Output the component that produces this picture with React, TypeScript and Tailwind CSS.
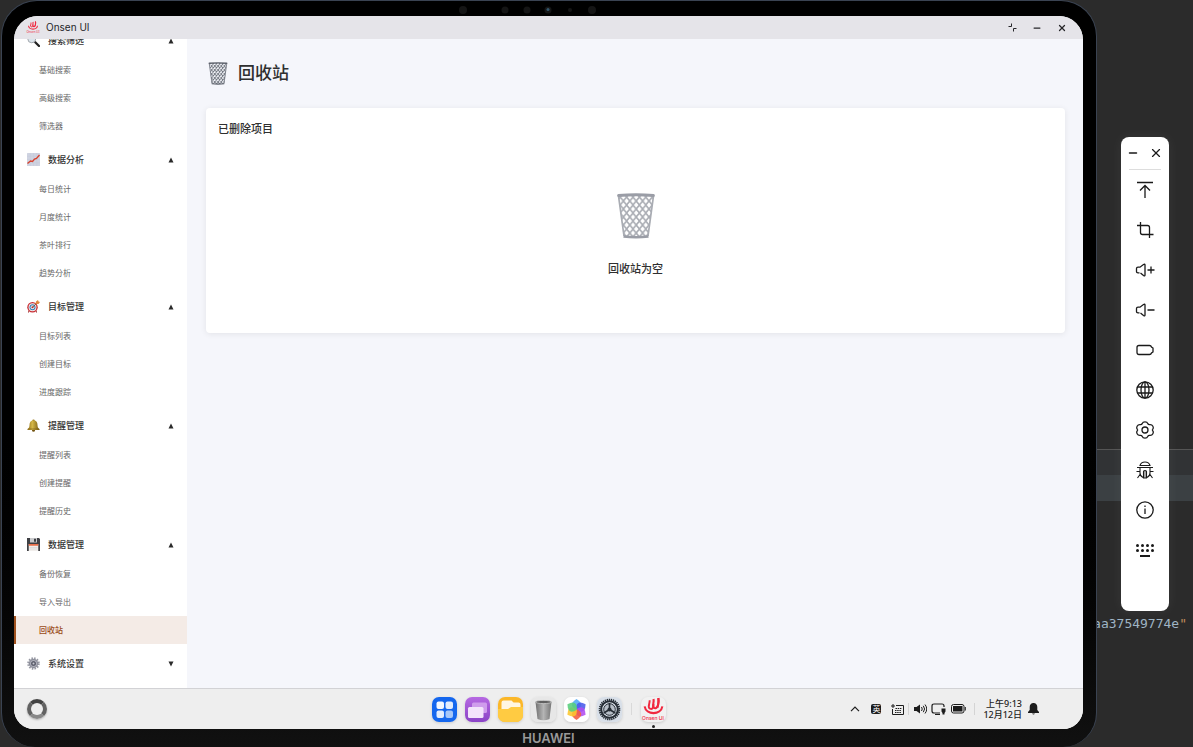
import { useState } from "react";
import type { ReactNode } from "react";
import { Minus, X } from "lucide-react";

interface MenuGroup {
  title: string;
  icon: ReactNode;
  items: string[];
}

const SearchIcon = () => (
  <svg viewBox="0 0 26 26" className="size-[13px]">
    <path d="M15 15l9 9" stroke="#222" strokeWidth="4.5" strokeLinecap="round" />
    <circle cx="9.500" cy="9.500" r="8" fill="#dce5ec" stroke="#a3a7ad" strokeWidth="2" />
  </svg>
);

const ChartIcon = () => (
  <svg viewBox="0 0 26 26" className="size-[13px]">
    <rect width="26" height="26" rx="1" fill="#cfd3e1" />
    <path d="M0 6.500h26M0 13h26M0 19.500h26M6.500 0v26M13 0v26M19.500 0v26" stroke="#c4c9d9" />
    <path d="M1 21l6-5 4 1 4-5 4-1 6-7" fill="none" stroke="#d8432f" strokeWidth="2.8" />
  </svg>
);

const TargetIcon = () => (
  <svg viewBox="0 0 26 26" className="size-[13px]">
    <path d="M4 21l-1 4M18 21l1 4" stroke="#9b2a2a" strokeWidth="2" />
    <circle cx="11" cy="14.500" r="10.500" fill="#c92f35" />
    <circle cx="11" cy="14.500" r="7.800" fill="#f4eeee" />
    <circle cx="11" cy="14.500" r="6" fill="#3b7fb5" />
    <circle cx="11" cy="14.500" r="3.800" fill="#e9eef2" />
    <circle cx="11" cy="14.500" r="2.200" fill="#cc2f35" />
    <path d="M11 14.500L21 5" stroke="#7a4a2a" strokeWidth="1.800" />
    <path d="M17 8l1-5 4-3 1 3 3 1-3 4z" fill="#e0873f" />
  </svg>
);

const BellIcon = () => (
  <svg viewBox="0 0 26 26" className="size-[13px]">
    <defs>
      <linearGradient id="bellGold">
        <stop offset="0" stopColor="#8d6c15" />
        <stop offset=".4" stopColor="#d6b848" />
        <stop offset="1" stopColor="#765a10" />
      </linearGradient>
    </defs>
    <circle cx="13" cy="3.500" r="2.500" fill="#9b7a1c" />
    <circle cx="13" cy="22.500" r="3" fill="#755713" />
    <path d="M13 3c6 0 8 4 8 9 0 4 1 6 4 8v2H1v-2c3-2 4-4 4-8 0-5 2-9 8-9z" fill="url(#bellGold)" />
    <path d="M3 20h20" stroke="#735510" strokeWidth="1.200" />
  </svg>
);

const FloppyIcon = () => (
  <svg viewBox="0 0 26 26" className="size-[13px]">
    <path d="M0 0h24l2 2v24H0z" fill="#3f4044" />
    <rect x="6" width="14" height="9" fill="#c9cacc" />
    <rect x="14" y="1.500" width="4" height="6" fill="#3f4044" />
    <rect x="3.500" y="12" width="19" height="14" fill="#f1eeec" />
    <rect x="3.500" y="12" width="19" height="3.500" fill="#e86f4a" />
    <path d="M5 19h16M5 22h16" stroke="#ccc" />
  </svg>
);

const GearIcon = () => (
  <svg viewBox="0 0 26 26" className="size-[13px]">
    <circle cx="13" cy="13" r="10.500" fill="none" stroke="#9698a3" strokeWidth="4" strokeDasharray="3 2.500" />
    <circle cx="13" cy="13" r="9.500" fill="#8d8f9b" />
    <circle cx="13" cy="13" r="6.500" fill="#b9bac4" />
    <circle cx="13" cy="13" r="5" fill="#5d5f6d" />
    <circle cx="13" cy="13" r="2" fill="#c7c8d0" />
  </svg>
);

const WireBasket = ({ id, className, wire, rim }: { id: string; className: string; wire: string; rim: string }) => (
  <svg viewBox="0 0 38 46" className={className}>
    <defs>
      <pattern id={id} width="6.400" height="8" patternUnits="userSpaceOnUse">
        <path d="M0 0l6.400 8M6.400 0L0 8" stroke={wire} strokeWidth="1.700" fill="none" />
      </pattern>
    </defs>
    <path d="M1.500 2h35l-5 41q-12.500 2-25 0z" fill={`url(#${id})`} />
    <path d="M1.500 3l5.500 40M36.500 3L31 43" stroke={wire} strokeWidth="1.700" />
    <path d="M6.500 43.500q12.500 1.500 25 0" fill="none" stroke={rim} strokeWidth="2.400" />
    <path d="M1.500 2.500q17.500-1.500 35 0" fill="none" stroke={rim} strokeWidth="2.800" strokeLinecap="round" />
  </svg>
);

const OnsenMark = ({ className }: { className: string }) => (
  <svg viewBox="0 0 26 20" className={className} fill="none" stroke="#f0283f">
    <path d="M3 10.500c1.500 10 18.500 10 20 0" strokeWidth="2.400" />
    <path d="M8.500 3.500c1 3-3 8 .5 9.500s4-2.500 4-5" strokeWidth="2.200" />
    <path d="M13 2c1 4-2 8 .5 10s5-2 5-6V1" strokeWidth="2.400" />
    <path d="M18.500 1c1.500 4-.5 8-1 11" strokeWidth="2.200" />
  </svg>
);

const menu: MenuGroup[] = [
  { title: "搜索筛选", icon: <SearchIcon />, items: ["基础搜索", "高级搜索", "筛选器"] },
  { title: "数据分析", icon: <ChartIcon />, items: ["每日统计", "月度统计", "茶叶排行", "趋势分析"] },
  { title: "目标管理", icon: <TargetIcon />, items: ["目标列表", "创建目标", "进度跟踪"] },
  { title: "提醒管理", icon: <BellIcon />, items: ["提醒列表", "创建提醒", "提醒历史"] },
  { title: "数据管理", icon: <FloppyIcon />, items: ["备份恢复", "导入导出", "回收站"] },
  { title: "系统设置", icon: <GearIcon />, items: ["通用设置", "关于"] },
];

function TitleBar() {
  return (
    <header className="flex h-[23px] shrink-0 items-center bg-[#e5e4e9] pl-3 pr-4 text-[#26262a]">
      <div className="flex w-[14px] flex-col items-center">
        <OnsenMark className="h-[9px] w-3" />
        <span className="text-[3px] leading-[4px] text-[#f0283f]">Onsen UI</span>
      </div>
      <h1 className="ml-[6px] flex-1 font-['Inter',sans-serif] text-[10px]">Onsen UI</h1>
      <div className="flex items-center gap-[15px]">
        <button aria-label="还原">
          <svg viewBox="0 0 9 9" className="size-[9px]" fill="none" stroke="currentColor">
            <path d="M3.500 0.500v3h-3M8.500 5.500h-3v3" />
          </svg>
        </button>
        <button aria-label="最小化">
          <Minus className="size-[10px]" strokeWidth={3} />
        </button>
        <button aria-label="关闭">
          <X className="size-[10px]" strokeWidth={3} />
        </button>
      </div>
    </header>
  );
}

function Sidebar() {
  const [closed, setClosed] = useState<string[]>(["系统设置"]);
  const [active, setActive] = useState("回收站");

  const toggle = (title: string) => {
    setClosed(closed.includes(title) ? closed.filter((t) => t !== title) : [...closed, title]);
  };

  return (
    <nav className="flex w-[173px] shrink-0 flex-col justify-end gap-1 overflow-hidden bg-white pb-[9px]">
      {menu.map((group) => (
        <div key={group.title} className="shrink-0">
          <button
            onClick={() => toggle(group.title)}
            className="flex h-[31px] w-full items-center px-[13px] text-[9px] font-medium text-[#333]"
          >
            {group.icon}
            <span className="ml-2 flex-1 text-left">{group.title}</span>
            <svg viewBox="0 0 6 6" className="size-[6px]">
              <path d={closed.includes(group.title) ? "M0.500 0.500h5L3 5.500z" : "M0.500 5.500h5L3 0.500z"} fill="#2a2a2a" />
            </svg>
          </button>
          {!closed.includes(group.title) &&
            group.items.map((item) => (
              <a
                key={item}
                href="#"
                onClick={() => setActive(item)}
                className={
                  item === active
                    ? "flex h-7 items-center border-l-2 border-[#a0521f] bg-[#f4ebe6] pl-[23px] text-[8px] font-medium text-[#9a4a17]"
                    : "flex h-7 items-center pl-[25px] text-[8px] text-[#666]"
                }
              >
                {item}
              </a>
            ))}
        </div>
      ))}
    </nav>
  );
}

function RecycleBin() {
  return (
    <main className="min-w-0 flex-1 bg-[#f5f6fb] pl-[19px] pr-[18px] pt-[22px]">
      <h2 className="flex h-6 items-center gap-[10px] text-[17px] font-medium text-[#2f2f2f]">
        <WireBasket id="basketSmall" className="ml-[2px] h-[23px] w-5" wire="#747982" rim="#5d626c" />
        回收站
      </h2>
      <section className="mt-[23px] rounded bg-white px-3 pb-[55px] pt-3 shadow-[0_1px_6px_rgba(0,0,0,0.08)]">
        <h3 className="text-[11px] font-medium leading-[18px] text-[#2f2f2f]">已删除项目</h3>
        <div className="mt-[55px] flex flex-col items-center">
          <WireBasket id="basketLarge" className="h-[46px] w-[38px]" wire="#a9acb3" rim="#9a9da6" />
          <p className="mt-[21px] text-[11px] font-medium leading-[18px] text-[#2f2f2f]">回收站为空</p>
        </div>
      </section>
    </main>
  );
}

const dockButton = "size-[25px] overflow-hidden rounded-[7px] shadow-[0_1px_3px_rgba(0,0,0,0.15)]";

function Dock() {
  return (
    <div className="flex items-center gap-2">
      <button aria-label="应用中心" className={dockButton}>
        <svg viewBox="0 0 25 25">
          <rect width="25" height="25" fill="#1567ee" />
          <rect x="4.500" y="4.500" width="7.500" height="7.500" rx="2" fill="#f4f8ff" />
          <rect x="13.500" y="4.500" width="7.500" height="7.500" rx="2" fill="#e2ecfd" />
          <rect x="4.500" y="13.500" width="7.500" height="7.500" rx="2" fill="#e2ecfd" />
          <rect x="13.500" y="13.500" width="7.500" height="7.500" rx="2" fill="#a6c6f8" />
        </svg>
      </button>
      <button aria-label="多任务" className={dockButton}>
        <svg viewBox="0 0 25 25">
          <defs>
            <linearGradient id="violet" x2="0" y2="1">
              <stop stopColor="#b669e2" />
              <stop offset="1" stopColor="#8a43c6" />
            </linearGradient>
          </defs>
          <rect width="25" height="25" fill="url(#violet)" />
          <rect x="7" y="5.500" width="15" height="10.500" rx="1.500" fill="#cf9cec" />
          <rect x="3" y="10" width="15.500" height="11" rx="1.500" fill="#f3e4fb" />
        </svg>
      </button>
      <button aria-label="文件管理" className={dockButton}>
        <svg viewBox="0 0 25 25">
          <rect width="25" height="25" fill="#fbb728" />
          <path d="M3.500 5.500q0-2 2-2h8l2 2h5q2 0 2 2V14h-19z" fill="#fff6e2" />
          <path d="M0 12h10l3-2h12v15H0z" fill="#ffcb42" />
        </svg>
      </button>
      <button aria-label="回收站" className={dockButton}>
        <svg viewBox="0 0 25 25">
          <defs>
            <linearGradient id="steel">
              <stop stopColor="#707070" />
              <stop offset=".5" stopColor="#b5b5b5" />
              <stop offset="1" stopColor="#777" />
            </linearGradient>
          </defs>
          <rect width="25" height="25" fill="#e7e7e7" />
          <path d="M4.500 5h16L18.500 22q-6 2.500-12 0z" fill="url(#steel)" />
          <ellipse cx="12.500" cy="5" rx="8" ry="1.600" fill="#606060" stroke="#d2d2d2" strokeWidth=".7" />
        </svg>
      </button>
      <button aria-label="图库" className={dockButton}>
        <svg viewBox="0 0 25 25">
          <rect width="25" height="25" fill="#fff" />
          {["#4fa8f7", "#4a5bea", "#b14df0", "#f45b3d", "#fcc62d", "#58ce7c"].map((color, i) => (
            <path
              key={color}
              d="M12.500 13q-9.500-5 0-11 9.500 6 0 11z"
              fill={color}
              opacity=".88"
              transform={`rotate(${i * 60} 12.500 12.500)`}
            />
          ))}
        </svg>
      </button>
      <button aria-label="设置" className={dockButton}>
        <svg viewBox="0 0 25 25">
          <rect width="25" height="25" fill="#d8dfe8" />
          <circle cx="12.500" cy="12.500" r="9.800" fill="none" stroke="#252c34" strokeWidth="2" strokeDasharray="1.300 .752" />
          <circle cx="12.500" cy="12.500" r="8.300" fill="none" stroke="#252c34" strokeWidth="2" />
          <circle cx="12.500" cy="12.500" r="5.800" fill="#b7bec7" stroke="#252c34" strokeWidth="1" />
          <path d="M12.500 12.500V6M12.500 12.500l-5.800 3.500M12.500 12.500l5.800 3.500" stroke="#252c34" strokeWidth="1.600" />
          <circle cx="12.500" cy="12.500" r="2" fill="#252c34" />
        </svg>
      </button>
      <span className="mx-[1px] h-3 w-px bg-[#d9d9d9]" />
      <button
        aria-label="Onsen UI"
        className="relative flex size-[25px] flex-col items-center rounded-[7px] bg-[#f1f1f1] shadow-[0_1px_3px_rgba(0,0,0,0.15)]"
      >
        <OnsenMark className="h-[18px] w-[23px]" />
        <span className="whitespace-nowrap font-['Inter',sans-serif] text-[5px] font-medium leading-[7px] text-[#f0283f]">
          Onsen UI
        </span>
        <span className="absolute -bottom-[6px] left-[11px] size-[3px] rounded-full bg-[#222]" />
      </button>
    </div>
  );
}

function StatusTray() {
  return (
    <div className="flex items-center justify-end pr-11 text-[#1c1c1c]">
      <svg viewBox="0 0 10 6" className="h-[6px] w-[10px]" fill="none" stroke="currentColor" strokeWidth="1.200">
        <path d="M1 5.200l4-4 4 4" />
      </svg>
      <span className="ml-[11px] flex size-[10px] items-center justify-center rounded-[2px] bg-[#1c1c1c] text-[8px] text-white">
        英
      </span>
      <svg viewBox="0 0 13 11" className="ml-[10px] h-[11px] w-[13px]" fill="none" stroke="currentColor">
        <path d="M5 1.500h7.500v9h-11V5M0 2h4M2 0v4" />
        <path d="M4.500 4.500h6M4 6.500h6.500M4 8.500h6.500" strokeDasharray="1.500 .7" />
      </svg>
      <span className="ml-1 h-3 w-px bg-[#d4d4d4]" />
      <svg viewBox="0 0 13 10" className="ml-[5px] h-[10px] w-[13px]" fill="none" stroke="currentColor">
        <path d="M0 3h2.500L6 .5v9L2.500 7H0z" fill="currentColor" stroke="none" />
        <path d="M7.500 3q1.500 2 0 4M9.300 1.800q2.600 3.200 0 6.400M11 .5q3.500 4.500 0 9" />
      </svg>
      <svg viewBox="0 0 15 12" className="ml-1 h-3 w-[15px]" fill="none" stroke="currentColor" strokeWidth="1.200">
        <path d="M9 10H3Q1 10 1 8V3q0-2 2-2h8q2 0 2 2v1M4 11.500h5" />
        <path d="M10.500 5.500h4v3l-1 1.500v1.500h-2V10l-1-1.500z" fill="currentColor" stroke="none" />
      </svg>
      <svg viewBox="0 0 15 10" className="ml-[5px] h-[10px] w-[15px]" fill="none" stroke="currentColor">
        <rect x=".5" y=".5" width="12.500" height="8.500" rx="2" />
        <rect x="2.500" y="2.500" width="8.500" height="4.500" fill="currentColor" />
        <path d="M14.300 3v3.500" />
      </svg>
      <span className="ml-2 h-3 w-px bg-[#d4d4d4]" />
      <div className="ml-2 text-right text-[9px] font-medium leading-[11px]">
        <div>上午9:13</div>
        <div>12月12日</div>
      </div>
      <svg viewBox="0 0 11 12" className="ml-[6px] h-3 w-[11px]" fill="currentColor">
        <path d="M5.500 0C8 0 9.300 1.800 9.300 4v3L11 9v1H0V9l1.700-2V4C1.700 1.800 3 0 5.500 0zM4 10.500h3q-1.500 2-3 0z" />
      </svg>
    </div>
  );
}

function TaskBar() {
  return (
    <footer className="grid h-[41px] shrink-0 grid-cols-[1fr_auto_1fr] items-center border-t border-[#d2d2d5] bg-[#eee]">
      <button
        aria-label="主屏幕"
        className="ml-[13px] size-5 rounded-full border-4 border-b-[#888] border-l-[#626262] border-r-[#626262] border-t-[#444] shadow-[0_1px_2px_rgba(0,0,0,0.25)]"
      />
      <Dock />
      <StatusTray />
    </footer>
  );
}

const stroke = { fill: "none", stroke: "currentColor", strokeWidth: 1.3 };

const tools = [
  {
    label: "置顶",
    icon: (
      <svg viewBox="0 0 20 20" className="size-5" {...stroke}>
        <path d="M2 2.500h16M10 18V6M5 10.500L10 5.500l5 5" />
      </svg>
    ),
  },
  {
    label: "截屏",
    icon: (
      <svg viewBox="0 0 20 20" className="size-5" {...stroke}>
        <path d="M5.500 2v10.500q0 2 2 2H18.500M2 5.500h10.500q2 0 2 2V18" />
      </svg>
    ),
  },
  {
    label: "音量加",
    icon: (
      <svg viewBox="0 0 20 20" className="size-5" {...stroke}>
        <path d="M4.500 12.800h-1.500Q1.500 12.800 1.500 11.500v-3Q1.500 7.200 3 7.200h2L8.500 4.500q1.500-1 1.500.5v10q0 1.500-1.500.5L5.500 13M12.500 10h7M16 6.500v7" />
      </svg>
    ),
  },
  {
    label: "音量减",
    icon: (
      <svg viewBox="0 0 20 20" className="size-5" {...stroke}>
        <path d="M4.500 12.800h-1.500Q1.500 12.800 1.500 11.500v-3Q1.500 7.200 3 7.200h2L8.500 4.500q1.500-1 1.500.5v10q0 1.500-1.500.5L5.500 13M12.500 10h7" />
      </svg>
    ),
  },
  {
    label: "电池",
    icon: (
      <svg viewBox="0 0 20 20" className="size-5" {...stroke}>
        <path d="M4 5.500h10.500q1.500 0 2 1.500l1.500 1v4l-1.500 1q-.5 1.500-2 1.500H4Q2 14.500 2 12.500v-5Q2 5.500 4 5.500z" />
      </svg>
    ),
  },
  {
    label: "网络",
    icon: (
      <svg viewBox="0 0 20 20" className="size-5" {...stroke}>
        <circle cx="10" cy="10" r="8.200" />
        <ellipse cx="10" cy="10" rx="4" ry="8.200" />
        <path d="M2.500 7h15M2.500 13h15M10 2v16" />
      </svg>
    ),
  },
  {
    label: "设置",
    icon: (
      <svg viewBox="0 0 20 20" className="size-5" {...stroke}>
        <path d="M7.200 3.600Q7.800 1.800 10 1.800t2.800 1.800q.6 1.200 2 1 2.100-.2 3.100 1.600t-.2 3.200q-.6.600 0 1.200 1.200 1.400.2 3.200t-3.100 1.600q-1.400-.2-2 1-.6 1.800-2.800 1.800t-2.800-1.800q-.6-1.200-2-1-2.100.200-3.100-1.600t.2-3.200q.6-.6 0-1.200-1.200-1.400-.2-3.200t3.100-1.600q1.400.2 2-1z" />
        <circle cx="10" cy="10" r="3" />
      </svg>
    ),
  },
  {
    label: "调试",
    icon: (
      <svg viewBox="0 0 20 20" className="size-5" fill="none" stroke="currentColor" strokeWidth="1.1">
        <path d="M5 5.500Q6 2 10 2t5 3.500zM2 7.500h16M5 7.500V13q0 3 3 4.500M15 7.500V13q0 3-3 4.500M1.500 11.500H5M15 11.500h3.500M5 14.500l-2.500 3.500M15 14.500l2.500 3.500" />
        <path d="M8.500 18v-6.500q0-1 1.500-1t1.500 1V18z" fill="#aaa" />
      </svg>
    ),
  },
  {
    label: "信息",
    icon: (
      <svg viewBox="0 0 20 20" className="size-5" {...stroke}>
        <circle cx="10" cy="10" r="8.200" />
        <path d="M10 8.500V14M10 5.500V7" />
      </svg>
    ),
  },
  {
    label: "键盘",
    icon: (
      <svg viewBox="0 0 20 20" className="size-5" fill="currentColor">
        {[2.5, 7.5, 12.5, 17.5].map((x) => (
          <g key={x}>
            <circle cx={x} cy="5.500" r="1.500" />
            <circle cx={x} cy="10.500" r="1.500" />
          </g>
        ))}
        <rect x="5" y="15" width="10" height="2" />
      </svg>
    ),
  },
];

function EmulatorTools() {
  return (
    <aside className="absolute left-6 top-[137px] flex w-12 flex-col items-center rounded-lg bg-white pb-[41px] text-[#1a1a1a] shadow-[0_0_14px_rgba(255,255,255,0.06)]">
      <div className="flex h-8 w-full items-center justify-between px-[6px]">
        <button aria-label="最小化">
          <Minus className="size-3" strokeWidth={3} />
        </button>
        <button aria-label="关闭">
          <X className="size-[14px]" strokeWidth={2} />
        </button>
      </div>
      <hr className="w-8 border-[#ddd]" />
      {tools.map((tool) => (
        <button key={tool.label} aria-label={tool.label} className="flex h-10 w-full items-center justify-center">
          {tool.icon}
        </button>
      ))}
    </aside>
  );
}

export default function App() {
  return (
    <div className="flex h-screen overflow-hidden bg-[#2b2b2b] font-['Noto_Sans','Noto_Sans_CJK_SC',sans-serif]">
      <div className="ml-px flex min-w-0 flex-1 flex-col rounded-b-[34px] rounded-t-[36px] border border-b-0 border-[#3a4352] bg-linear-to-b from-black from-50% to-[#111] pl-3 pr-[13px]">
        <div className="flex h-[15px] shrink-0 items-center justify-center">
          <svg viewBox="0 0 220 10" className="h-[10px] w-[220px]" fill="#151515">
            <circle cx="24" cy="6" r="4" />
            <circle cx="66" cy="6" r="3.500" />
            <circle cx="88" cy="6" r="3.500" />
            <circle cx="109" cy="6" r="3.500" />
            <circle cx="109" cy="5.500" r="1.500" fill="#33566b" />
            <circle cx="131" cy="6" r="2" />
            <circle cx="153" cy="6" r="4" />
          </svg>
        </div>
        <div className="flex min-h-0 flex-1 flex-col overflow-hidden rounded-b-[20px] rounded-t-[24px] bg-white">
          <TitleBar />
          <div className="flex min-h-0 flex-1">
            <Sidebar />
            <RecycleBin />
          </div>
          <TaskBar />
        </div>
        <div className="flex h-[18px] shrink-0 items-center justify-center pt-px font-['Inter',sans-serif] text-[13px] font-semibold text-[#999]">
          HUAWEI
        </div>
      </div>
      <div className="relative w-24 shrink-0 pt-[449px]">
        <div className="h-[26px] border-t border-[#555] bg-[#313335]" />
        <div className="h-[26px] bg-[#3b4043]" />
        <code className="mt-[113px] flex h-5 items-center justify-end overflow-hidden pr-[6px] font-['DejaVu_Sans_Mono',monospace] text-[13px] text-[#9fb4c4]">
          aa37549774e<span className="text-[#c08d5b]">"</span>
        </code>
        <EmulatorTools />
      </div>
    </div>
  );
}
